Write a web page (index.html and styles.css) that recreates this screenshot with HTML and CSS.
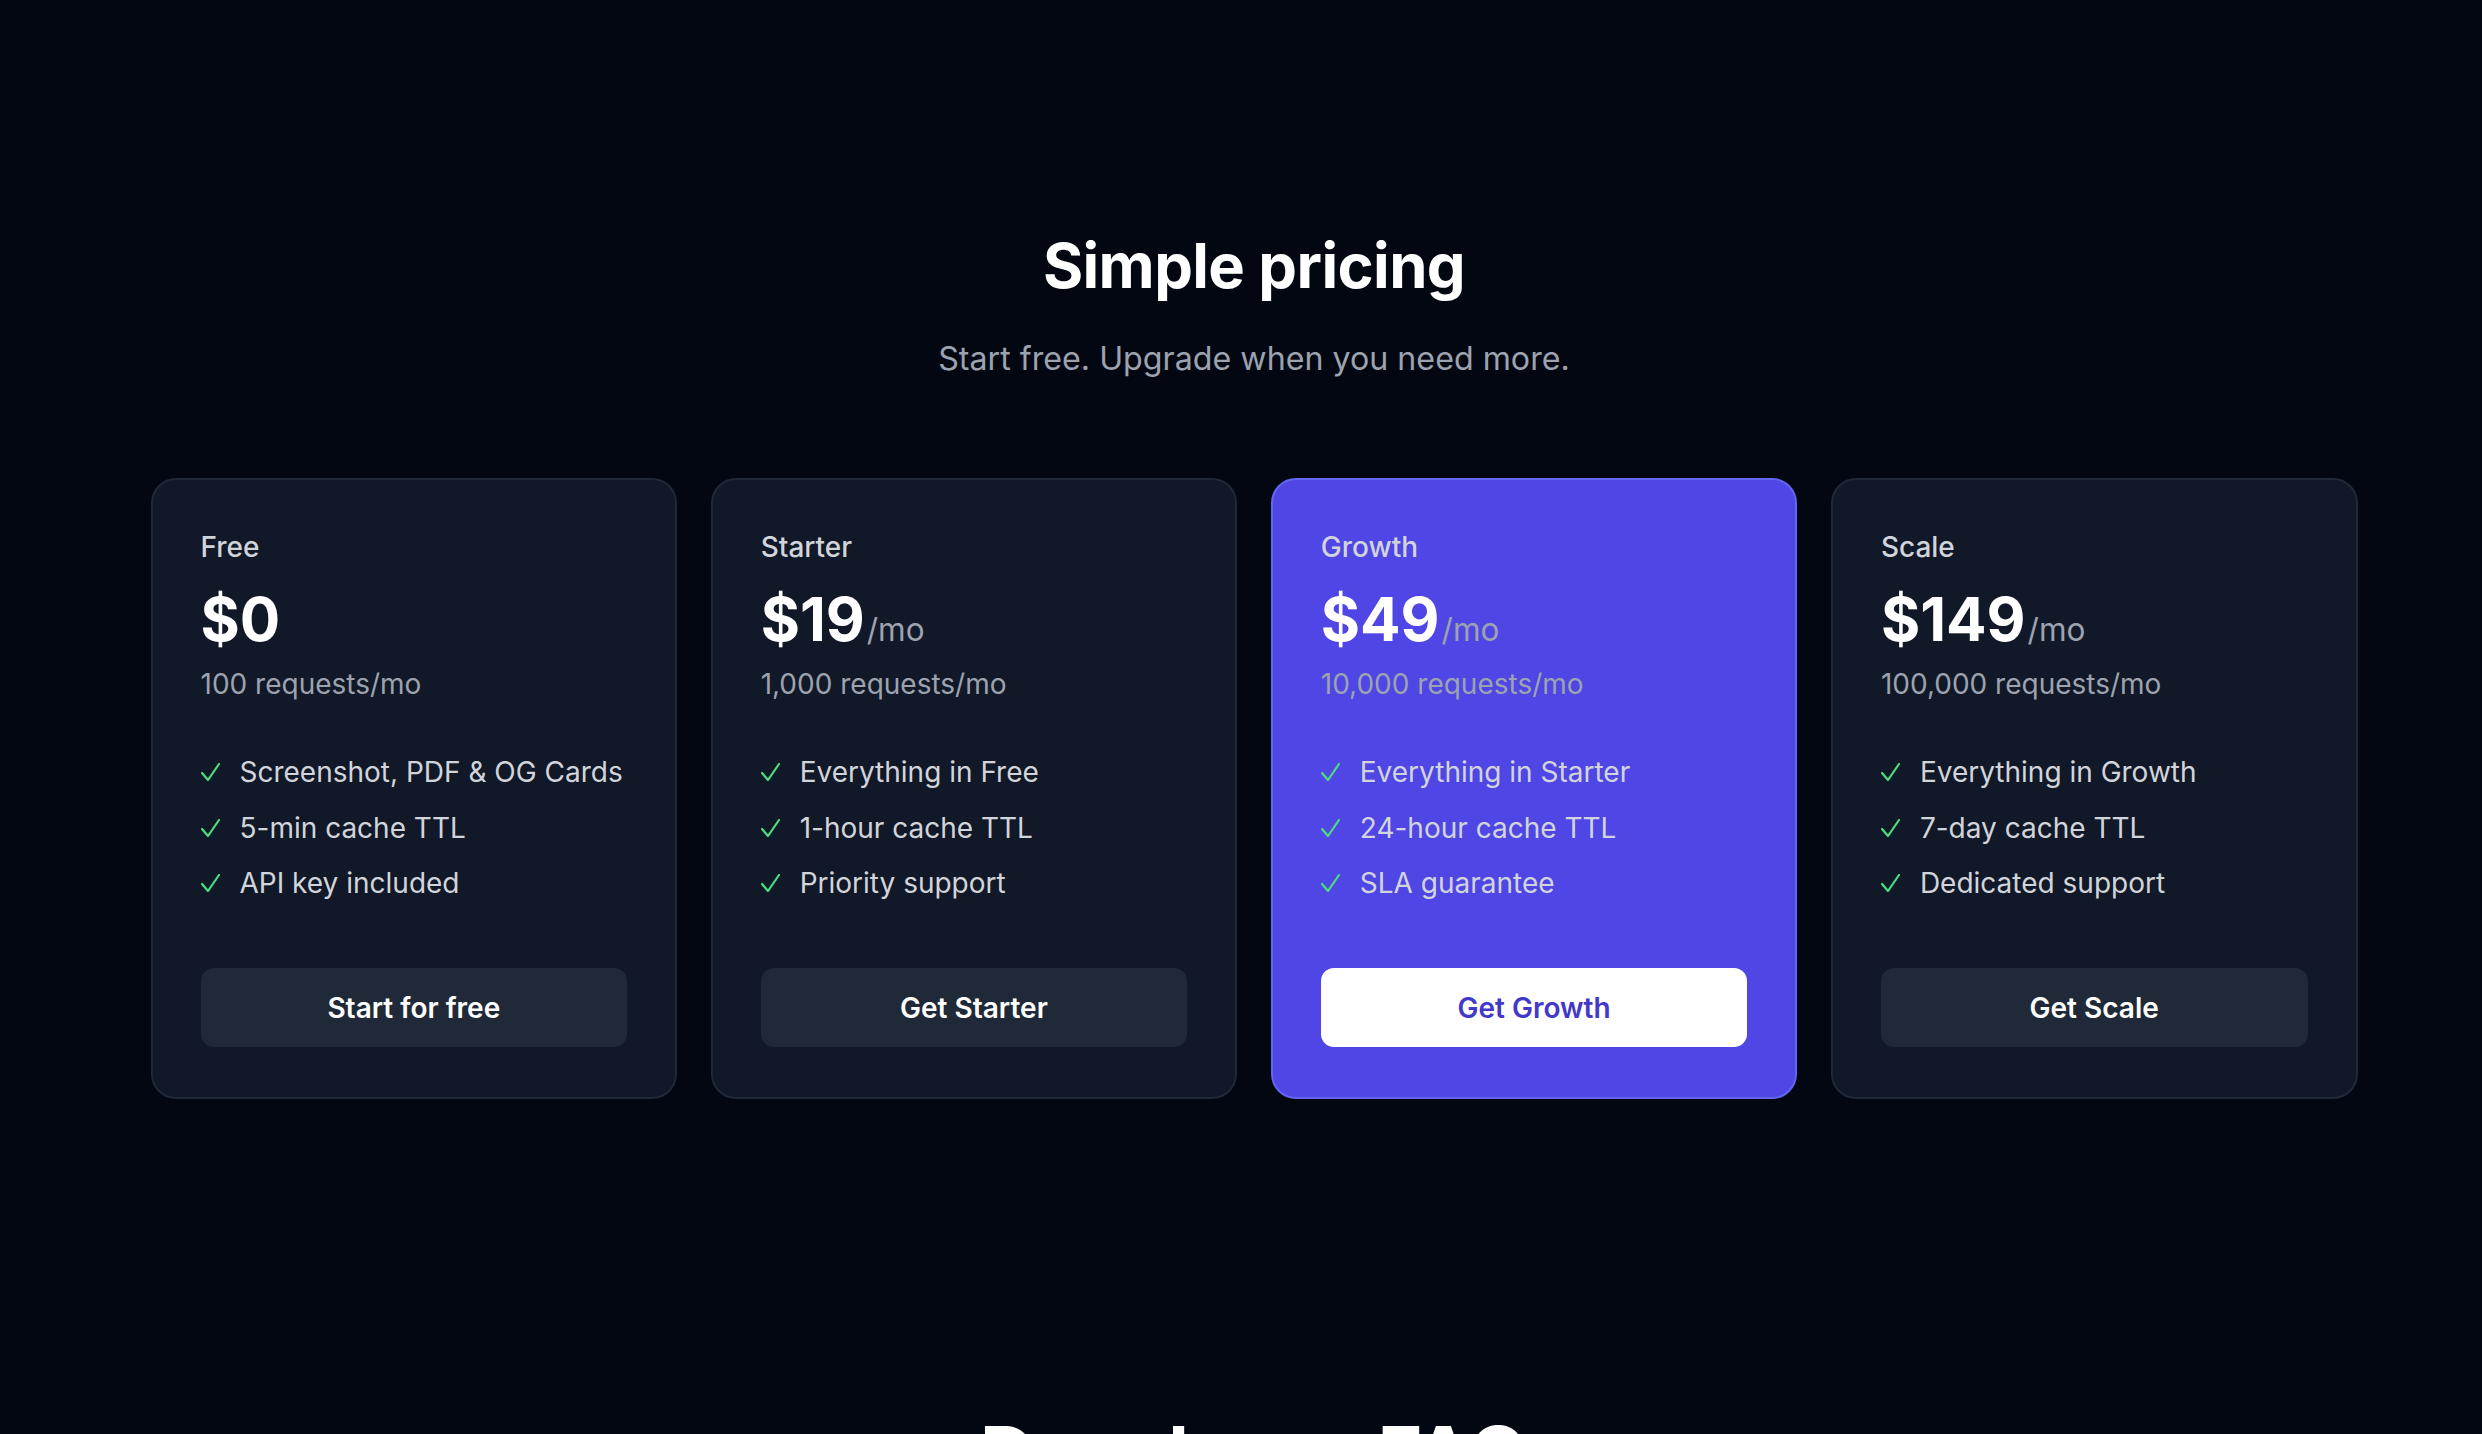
FILE: index.html
```html
<!DOCTYPE html>
<html lang="en">
<head>
<meta charset="utf-8">
<title>Pricing</title>
<link rel="stylesheet" href="styles.css">
</head>
<body>
<section class="pricing">
  <h2 class="title">Simple pricing</h2>
  <p class="subtitle">Start free. Upgrade when you need more.</p>
  <div class="plans">
    <div class="card">
      <div class="name">Free</div>
      <div class="price"><span class="amount">$0</span></div>
      <div class="quota">100 requests/mo</div>
      <ul class="features">
        <li><svg class="check" viewBox="0 0 19 18"><polyline points="1,10 7,17 18,1"/></svg><span>Screenshot, PDF &amp; OG Cards</span></li>
        <li><svg class="check" viewBox="0 0 19 18"><polyline points="1,10 7,17 18,1"/></svg><span>5-min cache TTL</span></li>
        <li><svg class="check" viewBox="0 0 19 18"><polyline points="1,10 7,17 18,1"/></svg><span>API key included</span></li>
      </ul>
      <a class="btn" href="#">Start for free</a>
    </div>
    <div class="card">
      <div class="name">Starter</div>
      <div class="price"><span class="amount">$19</span><span class="per">/mo</span></div>
      <div class="quota">1,000 requests/mo</div>
      <ul class="features">
        <li><svg class="check" viewBox="0 0 19 18"><polyline points="1,10 7,17 18,1"/></svg><span>Everything in Free</span></li>
        <li><svg class="check" viewBox="0 0 19 18"><polyline points="1,10 7,17 18,1"/></svg><span>1-hour cache TTL</span></li>
        <li><svg class="check" viewBox="0 0 19 18"><polyline points="1,10 7,17 18,1"/></svg><span>Priority support</span></li>
      </ul>
      <a class="btn" href="#">Get Starter</a>
    </div>
    <div class="card card-featured">
      <div class="name">Growth</div>
      <div class="price"><span class="amount">$49</span><span class="per">/mo</span></div>
      <div class="quota">10,000 requests/mo</div>
      <ul class="features">
        <li><svg class="check" viewBox="0 0 19 18"><polyline points="1,10 7,17 18,1"/></svg><span>Everything in Starter</span></li>
        <li><svg class="check" viewBox="0 0 19 18"><polyline points="1,10 7,17 18,1"/></svg><span>24-hour cache TTL</span></li>
        <li><svg class="check" viewBox="0 0 19 18"><polyline points="1,10 7,17 18,1"/></svg><span>SLA guarantee</span></li>
      </ul>
      <a class="btn btn-light" href="#">Get Growth</a>
    </div>
    <div class="card">
      <div class="name">Scale</div>
      <div class="price"><span class="amount">$149</span><span class="per">/mo</span></div>
      <div class="quota">100,000 requests/mo</div>
      <ul class="features">
        <li><svg class="check" viewBox="0 0 19 18"><polyline points="1,10 7,17 18,1"/></svg><span>Everything in Growth</span></li>
        <li><svg class="check" viewBox="0 0 19 18"><polyline points="1,10 7,17 18,1"/></svg><span>7-day cache TTL</span></li>
        <li><svg class="check" viewBox="0 0 19 18"><polyline points="1,10 7,17 18,1"/></svg><span>Dedicated support</span></li>
      </ul>
      <a class="btn" href="#">Get Scale</a>
    </div>
  </div>
</section>
<section class="next">
  <h2 class="next-title">Developer FAQ</h2>
</section>
</body>
</html>
```
FILE: styles.css
```css
html {
  overflow: hidden;
}
body {
  margin: 0;
  padding-left: 26px;
  background: #030712;
  font-family: Inter, "Noto Sans", sans-serif;
  color: #ffffff;
}
.pricing {
  padding-top: 230px;
  text-align: center;
}
.title {
  margin: 0;
  font-size: 61.5px;
  line-height: 72px;
  font-weight: 700;
  letter-spacing: -0.6px;
  color: #ffffff;
}
.subtitle {
  margin: 35px 0 0;
  font-size: 32.2px;
  line-height: 44px;
  color: #9ca3af;
}
.plans {
  width: 2207px;
  margin: 97px auto 0;
  display: grid;
  grid-template-columns: repeat(4, 1fr);
  gap: 33.5px;
  text-align: left;
}
.card {
  background: #111827;
  border: 2px solid #1f2937;
  border-radius: 25px;
  padding: 50px 48px 50px;
  display: flex;
  flex-direction: column;
}
.card-featured {
  background: #4f46e5;
  border-color: #6366f1;
}
.name {
  font-size: 28px;
  line-height: 34px;
  font-weight: 500;
  color: #d1d5db;
}
.price {
  margin-top: 20px;
  height: 70px;
  display: flex;
  align-items: baseline;
}
.amount {
  font-size: 60px;
  line-height: 70px;
  font-weight: 700;
  color: #ffffff;
}
.per {
  margin-left: 2px;
  font-size: 31.5px;
  line-height: 1;
  color: #9ca3af;
}
.quota {
  margin-top: 11px;
  font-size: 28px;
  line-height: 38px;
  color: #9ca3af;
}
.features {
  list-style: none;
  margin: 50px 0 0;
  padding: 0;
  display: flex;
  flex-direction: column;
  gap: 17.7px;
}
.features li {
  display: flex;
  align-items: center;
  gap: 20px;
  font-size: 28px;
  line-height: 38px;
  color: #d1d5db;
}
.check {
  width: 19px;
  height: 18px;
  flex: none;
  fill: none;
  stroke: #4ade80;
  stroke-width: 2.2;
  stroke-linecap: round;
  stroke-linejoin: round;
}
.btn {
  margin-top: 66px;
  height: 79px;
  display: flex;
  align-items: center;
  justify-content: center;
  border-radius: 13px;
  background: #1f2937;
  color: #ffffff;
  font-size: 28px;
  font-weight: 600;
  text-decoration: none;
}
.btn-light {
  background: #ffffff;
  color: #4338ca;
}
.next {
  margin-top: 312px;
  text-align: center;
}
.next-title {
  margin: 0;
  font-size: 76px;
  line-height: 84px;
  font-weight: 700;
  color: #ffffff;
}
```
